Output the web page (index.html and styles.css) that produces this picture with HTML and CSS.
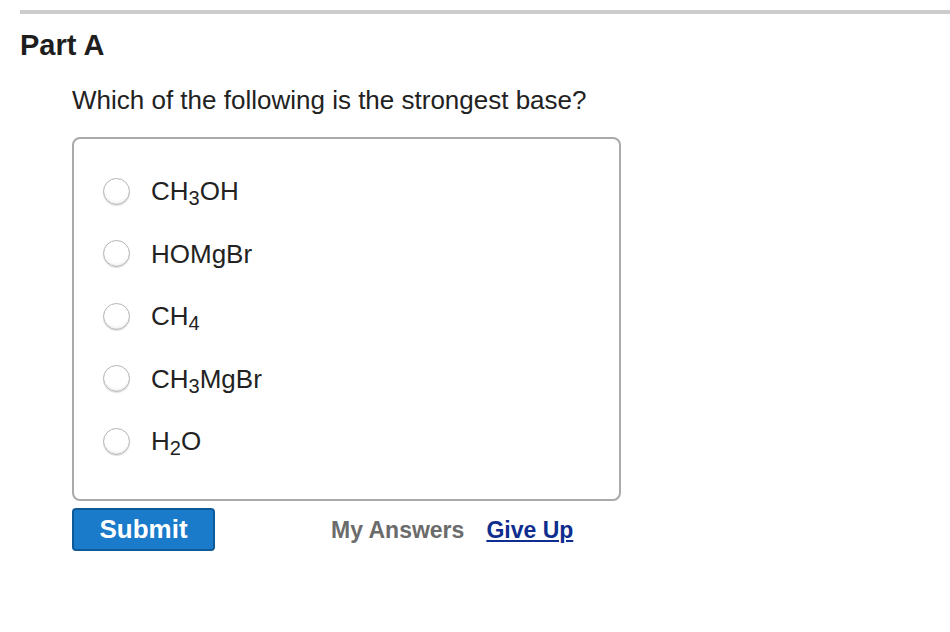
FILE: index.html
```html
<!DOCTYPE html>
<html>
<head>
<meta charset="utf-8">
<link rel="stylesheet" href="styles.css">
</head>
<body>
<div class="rule"></div>
<h2 class="part">Part A</h2>
<div class="question">
  <p class="prompt">Which of the following is the strongest base?</p>
  <div class="choices">
    <label class="choice"><span class="radio"></span><span class="lbl">CH<sub>3</sub>OH</span></label>
    <label class="choice"><span class="radio"></span><span class="lbl">HOMgBr</span></label>
    <label class="choice"><span class="radio"></span><span class="lbl">CH<sub>4</sub></span></label>
    <label class="choice"><span class="radio"></span><span class="lbl">CH<sub>3</sub>MgBr</span></label>
    <label class="choice"><span class="radio"></span><span class="lbl">H<sub>2</sub>O</span></label>
  </div>
  <div class="actions">
    <button class="submit">Submit</button>
    <span class="my">My Answers</span>
    <a class="giveup" href="#">Give Up</a>
  </div>
</div>
</body>
</html>
```
FILE: styles.css
```css
html, body {
  margin: 0;
  padding: 0;
  background: #fff;
  font-family: "Liberation Sans", Arial, sans-serif;
  color: #222;
}
.rule {
  margin: 10px 0 0 20px;
  height: 4px;
  background: #cccccc;
}
.part {
  margin: 15px 0 0 20px;
  font-size: 29px;
  line-height: 32px;
  font-weight: bold;
  color: #1e1e1e;
}
.question {
  padding-left: 72px;
}
.prompt {
  margin: 24px 0 0 0;
  font-size: 26px;
  line-height: 30px;
  color: #222;
}
.choices {
  margin-top: 22px;
  border: 2px solid #aaaaaa;
  border-radius: 8px;
  display: flex;
  flex-direction: column;
  padding-top: 21px;
  box-sizing: border-box;
  width: 549px;
  height: 364px;
}
.choice {
  display: flex;
  align-items: center;
  height: 62.5px;
  padding-left: 29px;
  font-size: 26px;
}
.radio {
  width: 25px;
  height: 25px;
  border-radius: 50%;
  border: 1px solid #b3b3b3;
  background: radial-gradient(circle at 50% 35%, #ffffff 55%, #ececec 100%);
  box-shadow: 0 1px 1px rgba(0,0,0,0.12), inset 0 -1px 1px rgba(0,0,0,0.06);
  flex: none;
}
.lbl {
  margin-left: 21px;
  line-height: 30px;
  color: #222;
}
.lbl sub {
  font-size: 20px;
  vertical-align: -5px;
  line-height: 0;
}
.actions {
  display: flex;
  align-items: center;
  margin-top: 7px;
}
.submit {
  width: 143px;
  height: 43px;
  background: #1a7bcb;
  border: 2px solid #0e5a98;
  border-radius: 4px;
  color: #fff;
  font-family: "Liberation Sans", Arial, sans-serif;
  font-weight: bold;
  font-size: 26px;
  padding: 0;
}
.my {
  margin-left: 116px;
  font-weight: bold;
  font-size: 23px;
  color: #6b6b6b;
  position: relative;
  top: 1px;
}
.giveup {
  margin-left: 22px;
  font-weight: bold;
  font-size: 23px;
  color: #0f2d8e;
  text-decoration: underline;
  position: relative;
  top: 1px;
}
```
